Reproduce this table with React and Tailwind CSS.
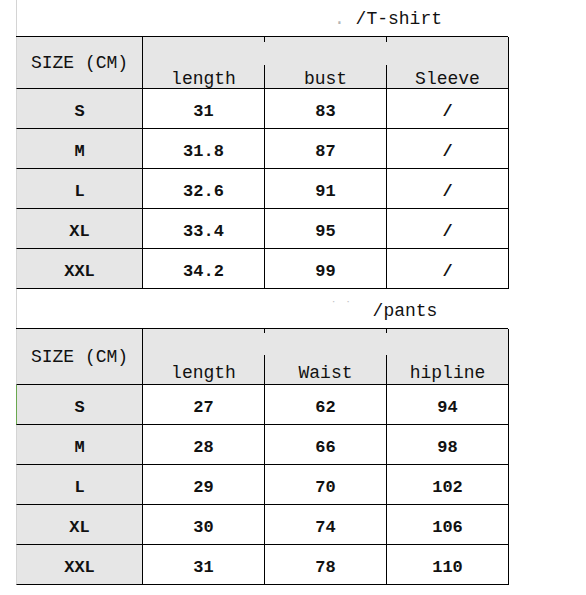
const tshirtRows = [
  ['S', '31', '83', '/'],
  ['M', '31.8', '87', '/'],
  ['L', '32.6', '91', '/'],
  ['XL', '33.4', '95', '/'],
  ['XXL', '34.2', '99', '/'],
];

const pantsRows = [
  ['S', '27', '62', '94'],
  ['M', '28', '66', '98'],
  ['L', '29', '70', '102'],
  ['XL', '30', '74', '106'],
  ['XXL', '31', '78', '110'],
];

// header cell whose right rule is broken (short tick at top, longer line at bottom)
function SplitHead({ label, headH, pad, tickH, lowH }) {
  return (
    <div className={`flex ${headH} border-b border-black bg-[#e6e6e6]`}>
      <div className={`flex flex-1 items-end justify-center ${pad} leading-[18px]`}>{label}</div>
      <div className="flex w-px flex-col justify-between">
        <div className={`${tickH} bg-black`} />
        <div className={`${lowH} bg-black`} />
      </div>
    </div>
  );
}

function SizeTable({ heads, rows, headH, pad, tickH, lowH, greenFirst }) {
  return (
    <div className="grid grid-cols-[127px_122px_122px_122px] border-t border-black">
      <div className={`flex ${headH} items-center justify-center border-b border-l border-r border-b-black border-r-black border-l-[#d4d4d4] bg-[#e6e6e6] leading-[18px]`}>
        SIZE (CM)
      </div>
      <SplitHead label={heads[0]} headH={headH} pad={pad} tickH={tickH} lowH={lowH} />
      <SplitHead label={heads[1]} headH={headH} pad={pad} tickH={tickH} lowH={lowH} />
      <div className={`flex ${headH} items-end justify-center border-b border-r border-black bg-[#e6e6e6] ${pad} leading-[18px]`}>
        {heads[2]}
      </div>
      {rows.map((r, i) => (
        <div key={i} className="contents">
          <div
            className={`flex h-10 items-center justify-center border-b border-l border-r border-b-black border-r-black bg-[#e6e6e6] pt-[6px] text-[17px] font-bold leading-[17px] ${
              greenFirst && i === 0 ? 'border-l-[#6aa84f]' : 'border-l-[#d4d4d4]'
            }`}
          >
            {r[0]}
          </div>
          {r.slice(1).map((v, j) => (
            <div
              key={j}
              className="flex h-10 items-center justify-center border-b border-r border-black pt-[6px] text-[17px] font-bold leading-[17px]"
            >
              {v}
            </div>
          ))}
        </div>
      ))}
    </div>
  );
}

export default function App() {
  return (
    <div className="h-[595px] w-[586px] bg-white font-['Liberation_Mono','Noto_Sans_CJK_SC',monospace] text-[18px] text-[#111]">
      <div className="ml-4 w-[492px]">
        <div className="h-9 border-l border-[#d4d4d4] pl-[317px] pt-[10px] leading-[18px]">
          <span className="text-[#b5b5b5]">.</span> /T-shirt
        </div>
        <SizeTable
          heads={['length', 'bust', 'Sleeve']}
          rows={tshirtRows}
          headH="h-[52px]"
          pad="pb-0"
          tickH="h-[5px]"
          lowH="h-[23px]"
        />
        <div className="h-[39px] border-l border-[#d4d4d4] pl-[313px] pt-[13px] leading-[18px]">
          <span className="relative -top-[6px] text-[12px] text-[#c4c4c4]">˙ ˙</span>
          <span className="ml-[21px]">/pants</span>
        </div>
        <SizeTable
          heads={['length', 'Waist', 'hipline']}
          rows={pantsRows}
          headH="h-[56px]"
          pad="pb-[2px]"
          tickH="h-[4px]"
          lowH="h-[29px]"
          greenFirst
        />
      </div>
    </div>
  );
}
